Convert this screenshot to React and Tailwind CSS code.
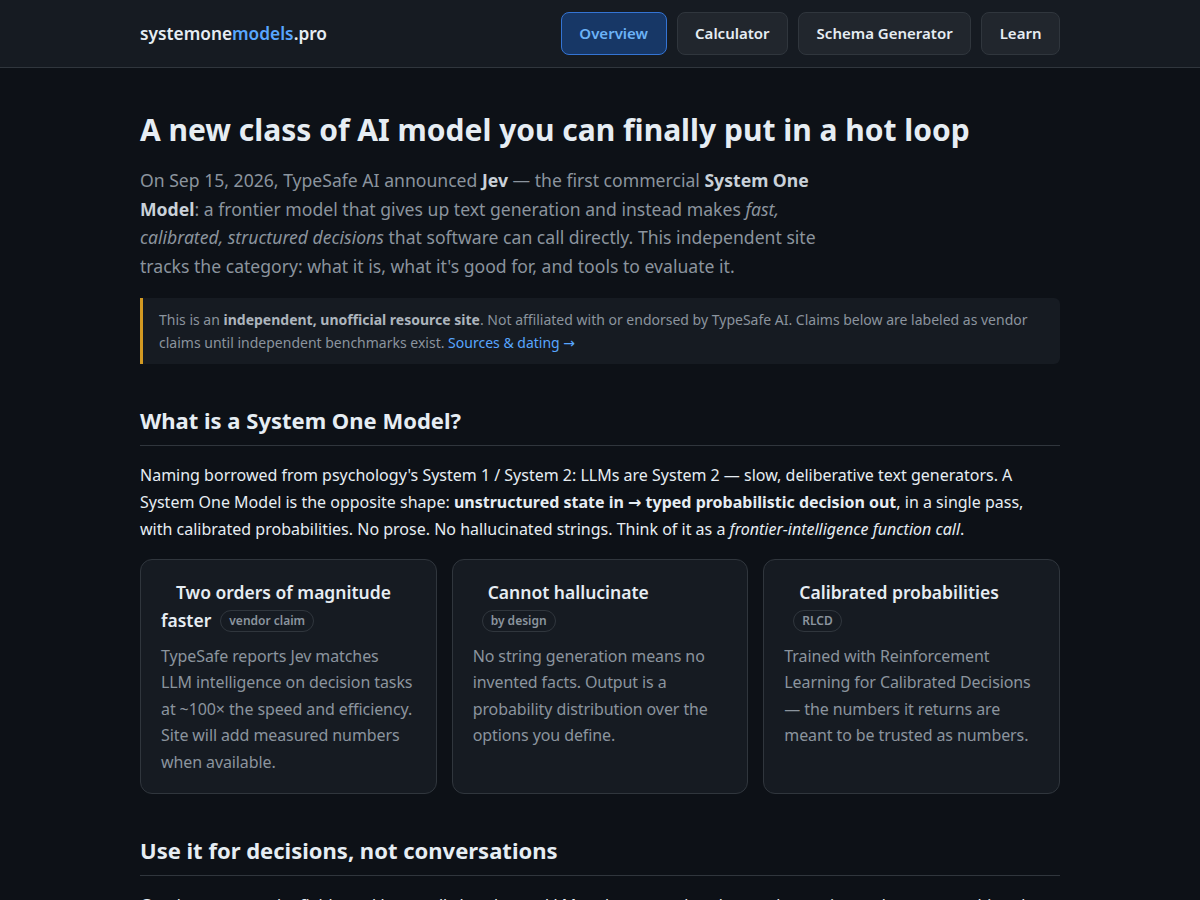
import React from 'react';

const navItems = [
  { name: 'Overview', active: true },
  { name: 'Calculator' },
  { name: 'Schema Generator' },
  { name: 'Learn' },
];

const cards = [
  {
    title: 'Two orders of magnitude faster',
    badge: 'vendor claim',
    body: 'TypeSafe reports Jev matches\nLLM intelligence on decision tasks at ~100× the speed and efficiency. Site will add measured numbers when available.',
  },
  {
    title: 'Cannot hallucinate',
    badge: 'by design',
    body: 'No string generation means no invented facts. Output is a probability distribution over the options you define.',
  },
  {
    title: 'Calibrated probabilities',
    badge: 'RLCD',
    body: 'Trained with Reinforcement Learning for Calibrated Decisions — the numbers it returns are meant to be trusted as numbers.',
  },
];

const Arrow = () => <span className="font-['DejaVu_Sans',sans-serif]">→</span>;

const Header = () => (
  <header className="bg-[#161b22] border-b border-[#30363d]">
    <div className="max-w-[920px] mx-auto h-[67px] flex items-center justify-between">
      <div className="text-[17.3px] font-semibold text-[#e6edf3]">
        systemone<span className="text-[#58a6ff]">models</span>.pro
      </div>
      <nav className="flex items-center gap-[10px]">
        {navItems.map((item) => (
          <a
            key={item.name}
            href="#"
            className={`h-[43px] px-[17.5px] flex items-center rounded-lg border text-[15px] font-semibold ${
              item.active
                ? 'bg-[#173766] border-[#3474d4] text-[#6cb3f7]'
                : 'bg-[#21262d] border-[#30363d] text-[#e6edf3]'
            }`}
          >
            {item.name}
          </a>
        ))}
      </nav>
    </div>
  </header>
);

const SectionTitle = ({ children }) => (
  <h2 className="mt-[41px] pb-[10px] border-b border-[#30363d] text-[22px] leading-[30px] font-bold text-[#e6edf3]">
    {children}
  </h2>
);

const App = () => {
  return (
    <div className="min-h-screen bg-[#0d1117] text-[#e6edf3] font-['Noto_Sans','Liberation_Sans',sans-serif]">
      <Header />

      <main className="max-w-[920px] mx-auto pt-11 pb-16">
        <h1 className="text-[30px] leading-[36px] font-bold text-[#e6edf3]">
          A new class of AI model you can finally put in a hot loop
        </h1>
        <p className="mt-[18px] max-w-[680px] text-[17.6px] leading-[28.5px] text-[#8b949e]">
          On Sep 15, 2026, TypeSafe AI announced <strong className="text-[#c9d1d9]">Jev</strong> — the first commercial{' '}
          <strong className="text-[#c9d1d9]">System One Model</strong>: a frontier model that gives up text generation and
          instead makes <em>fast, calibrated, structured decisions</em> that software can call directly. This independent
          site tracks the category: what it is, what it's good for, and tools to evaluate it.
        </p>

        {/* Disclaimer */}
        <div className="mt-[18px] bg-[#161b22] border-l-[3px] border-[#d29922] rounded-r-md px-4 py-[9.5px] text-[14px] leading-[23px] text-[#8b949e]">
          This is an <strong className="text-[#adb5bd]">independent, unofficial resource site</strong>. Not affiliated with or
          endorsed by TypeSafe AI. Claims below are labeled as vendor claims until independent benchmarks exist.{' '}
          <a href="#" className="text-[#58a6ff]">
            Sources &amp; dating <Arrow />
          </a>
        </div>

        <SectionTitle>What is a System One Model?</SectionTitle>
        <p className="mt-4 pr-5 text-[16px] leading-[26.5px] text-[#e6edf3]">
          Naming borrowed from psychology's System 1 / System 2: LLMs are System 2 — slow, deliberative text generators. A
          System One Model is the opposite shape:{' '}
          <strong>
            unstructured state in <Arrow /> typed probabilistic decision out
          </strong>
          , in a single pass, with calibrated probabilities. No prose. No hallucinated strings. Think of it as a{' '}
          <em>frontier-intelligence function call</em>.
        </p>

        <div className="mt-4 grid grid-cols-3 gap-[15px]">
          {cards.map((card) => (
            <div key={card.title} className="bg-[#161b22] border border-[#30363d] rounded-xl px-5 pt-[18px] pb-[18px]">
              <h3 className="text-[17.5px] leading-[28px] font-semibold text-[#e6edf3]">
                <span className="inline-block w-[15px]" />
                {card.title}
                <span className="ml-[9px] inline-block align-[2px] px-2 rounded-full border border-[#30363d] text-[12px] leading-[20px] font-semibold text-[#8b949e]">
                  {card.badge}
                </span>
              </h3>
              <p className="mt-[9px] whitespace-pre-line text-[16px] leading-[26.5px] tracking-[-0.1px] text-[#8b949e]">
                {card.body}
              </p>
            </div>
          ))}
        </div>

        <SectionTitle>Use it for decisions, not conversations</SectionTitle>
        <p className="mt-4 text-[16px] leading-[26.5px] text-[#e6edf3]">
          Good targets are the fields you'd normally hand to an LLM and parse, or hand to a rules engine and regret: anything
          that ends in a label, a score, a ranking, or a typed JSON value your code acts on immediately.
        </p>
      </main>
    </div>
  );
};

export default App;
